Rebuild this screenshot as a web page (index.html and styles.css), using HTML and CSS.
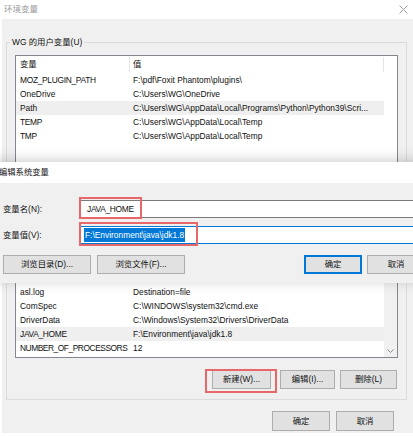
FILE: index.html
```html
<!DOCTYPE html>
<html lang="zh-CN">
<head>
<meta charset="utf-8">
<title>环境变量</title>
<link rel="stylesheet" href="styles.css">
</head>
<body>
<div class="win">
  <div class="titlebar">
    <span class="title">环境变量</span>
    <svg class="close" width="9" height="9" viewBox="0 0 9 9"><path d="M0.5 0.5L8.5 8.5M8.5 0.5L0.5 8.5" stroke="#a0a0a0" stroke-width="1" fill="none"/></svg>
  </div>
  <div class="body">
    <fieldset class="group user">
      <legend>WG 的用户变量(U)</legend>
      <div class="list ulist">
        <div class="rows">
          <div class="head"><span class="c1">变量</span><span class="c2">值</span></div>
          <div class="row"><span class="c1 caps">MOZ_PLUGIN_PATH</span><span class="c2">F:\pdf\Foxit Phantom\plugins\</span></div>
          <div class="row"><span class="c1">OneDrive</span><span class="c2">C:\Users\WG\OneDrive</span></div>
          <div class="row sel"><span class="c1">Path</span><span class="c2">C:\Users\WG\AppData\Local\Programs\Python\Python39\Scri...</span></div>
          <div class="row"><span class="c1 caps">TEMP</span><span class="c2">C:\Users\WG\AppData\Local\Temp</span></div>
          <div class="row"><span class="c1 caps">TMP</span><span class="c2">C:\Users\WG\AppData\Local\Temp</span></div>
        </div>
      </div>
      <div class="gbtns covered">
        <button class="btn w59">新建(N)...</button>
        <button class="btn w55 g9">编辑(E)...</button>
        <button class="btn w57 g5">删除(D)</button>
      </div>
    </fieldset>
    <fieldset class="group sys">
      <legend class="covered">系统变量(S)</legend>
      <div class="list slist">
        <div class="rows">
          <div class="head covered"><span class="c1">变量</span><span class="c2">值</span></div>
          <div class="row covered"><span class="c1">ACSvcPort</span><span class="c2">17532</span></div>
          <div class="row"><span class="c1">asl.log</span><span class="c2">Destination=file</span></div>
          <div class="row"><span class="c1">ComSpec</span><span class="c2">C:\WINDOWS\system32\cmd.exe</span></div>
          <div class="row"><span class="c1">DriverData</span><span class="c2">C:\Windows\System32\Drivers\DriverData</span></div>
          <div class="row sel"><span class="c1 caps">JAVA_HOME</span><span class="c2">F:\Environment\java\jdk1.8</span></div>
          <div class="row"><span class="c1 caps2">NUMBER_OF_PROCESSORS</span><span class="c2">12</span></div>
        </div>
        <div class="scroll">
          <svg class="down" width="7" height="4" viewBox="0 0 7 4"><path d="M0.5 0.5L3.5 3.5L6.5 0.5" stroke="#8a8a8a" stroke-width="1" fill="none"/></svg>
        </div>
      </div>
      <div class="gbtns">
        <button class="btn w59">新建(W)...</button>
        <button class="btn w55 g9">编辑(I)...</button>
        <button class="btn w57 g5">删除(L)</button>
      </div>
    </fieldset>
    <div class="footer">
      <button class="btn w58">确定</button>
      <button class="btn w58 g6">取消</button>
    </div>
  </div>
</div>

<div class="dialog">
  <div class="dtitle">编辑系统变量</div>
  <div class="dbody">
    <div class="frow r1">
      <label class="flabel">变量名(N):</label>
      <div class="input"><span class="caps">JAVA_HOME</span></div>
    </div>
    <div class="frow r2">
      <label class="flabel">变量值(V):</label>
      <div class="input focus"><span class="selected">F:\Environment\java\jdk1.8</span></div>
    </div>
    <div class="dbtns">
      <button class="btn w88">浏览目录(D)...</button>
      <button class="btn w88 g6">浏览文件(F)...</button>
      <span class="spacer"></span>
      <button class="btn w58 default">确定</button>
      <button class="btn w58 g5">取消</button>
    </div>
  </div>
</div>

<div class="mark m1"></div>
<div class="mark m2"></div>
<div class="mark m3"></div>
</body>
</html>
```

FILE: styles.css
```css
* { box-sizing: border-box; }
html, body { margin: 0; padding: 0; }
body {
  width: 413px;
  height: 436px;
  overflow: hidden;
  position: relative;
  background: #fff;
  font-family: "Liberation Sans", "Noto Sans CJK SC", sans-serif;
  font-size: 8.4px;
  color: #111;
}

.caps { letter-spacing: -0.3px; }
.caps2 { letter-spacing: -0.45px; }
.covered { visibility: hidden; }

.win {
  margin-left: 2px;
  width: 411px;
  height: 433px;
  background: #f0f0f0;
  display: flex;
  flex-direction: column;
}

.titlebar {
  height: 19px;
  flex: none;
  background: #fff;
  margin-left: -2px;
  padding: 0 5px 1px 4px;
  display: flex;
  align-items: center;
  justify-content: space-between;
  color: #9a9a9a;
}
.title { line-height: 12px; font-size: 8.5px; }
.close { display: block; }

.body {
  padding: 0 6px 0 4px;
  display: flex;
  flex-direction: column;
}

.group {
  margin: 0;
  padding: 0;
  border: 1px solid #dcdcdc;
  min-width: 0;
}
.group legend {
  margin-left: 3px;
  padding: 0 2px;
  line-height: 16px;
}
.user { margin-top: 15px; padding-bottom: 10px; }
.sys { margin-top: 4px; padding-bottom: 10px; }

.list {
  margin: 5px 8px 0;
  border: 1px solid #828790;
  background: #fff;
  display: flex;
  overflow: hidden;
}
.ulist { height: 135px; }
.slist { height: 105px; }

.rows { width: 368px; flex: none; }
.head, .row { display: flex; white-space: nowrap; }
.head { height: 17px; align-items: center; }
.row { height: 14px; line-height: 14px; }
.row.sel { background: #efefef; }
.c1 { width: 114px; flex: none; padding-left: 4px; overflow: hidden; }
.c2 { flex: 1; padding-left: 3px; overflow: hidden; }
.head .c1 { border-right: 1px solid #e5e5e5; line-height: 15px; }
.head .c2 { border-right: 1px solid #e5e5e5; line-height: 15px; }

.scroll {
  flex: 1;
  background: #f0f0f0;
  display: flex;
  flex-direction: column;
  justify-content: flex-end;
  align-items: center;
  padding-bottom: 4px;
}
.down { display: block; }

.gbtns {
  display: flex;
  justify-content: flex-end;
  margin-top: 12px;
  padding-right: 9px;
}
.user .gbtns { margin-top: 8px; }

.btn {
  height: 19px;
  padding: 0;
  margin: 0;
  border: 1px solid #adadad;
  background: #e1e1e1;
  font-family: inherit;
  font-size: 8.4px;
  color: #111;
  line-height: 15px;
  flex: none;
}
.w55 { width: 55px; }
.w57 { width: 57px; }
.w58 { width: 58px; }
.w59 { width: 59px; }
.w88 { width: 88px; }
.g5 { margin-left: 5px; }
.g6 { margin-left: 6px; }
.g9 { margin-left: 9px; }

.footer {
  display: flex;
  justify-content: flex-end;
  margin-top: 11px;
  padding-right: 13px;
}
.footer .btn { height: 20px; }

/* overlapping edit dialog */
.dialog {
  position: absolute;
  left: -12px;
  top: 162px;
  width: 480px;
  height: 121px;
  background: #f0f0f0;
  box-shadow: 0 -2px 12px rgba(0, 0, 0, 0.2);
  display: flex;
  flex-direction: column;
}
.dtitle {
  height: 21px;
  flex: none;
  background: #fff;
  padding: 0 0 3px 11px;
  display: flex;
  align-items: center;
  font-size: 8.3px;
}
.dbody {
  padding: 0 43px 0 15px;
  display: flex;
  flex-direction: column;
}
.frow { display: flex; align-items: center; height: 18px; }
.r1 { margin-top: 17px; }
.r2 { margin-top: 8px; }
.flabel { width: 77px; flex: none; line-height: 16px; }
.input {
  flex: 1;
  height: 18px;
  background: #fff;
  border: 1px solid #7a7a7a;
  padding-left: 6px;
  line-height: 16px;
  white-space: nowrap;
}
.input.focus { border-color: #0078d7; padding-left: 3px; }
.selected {
  background: #0078d7;
  color: #fff;
  padding: 0 1px;
  display: inline-block;
  line-height: 14px;
  height: 14px;
  vertical-align: top;
  margin-top: 1px;
}
.dbtns { display: flex; margin-top: 11px; }
.spacer { flex: 1; }
.btn.default { border: 2px solid #0078d7; }

/* red annotation rectangles */
.mark {
  position: absolute;
  border: 2px solid #e8686a;
}
.m1 { left: 79px; top: 197px; width: 63px; height: 22px; }
.m2 { left: 79px; top: 222px; width: 119px; height: 24px; }
.m3 { left: 205px; top: 369px; width: 72px; height: 24px; }
```
